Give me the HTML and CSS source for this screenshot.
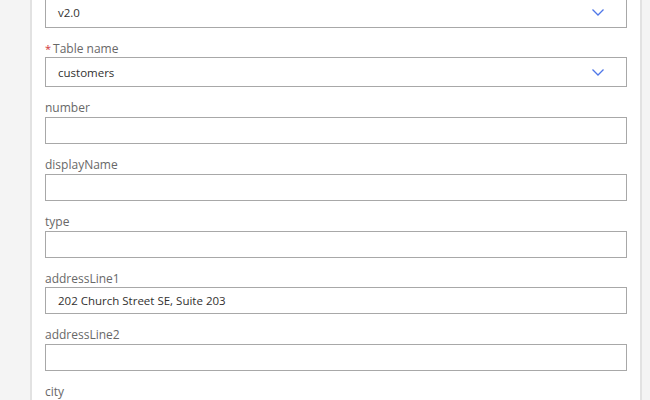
FILE: index.html
```html
<!DOCTYPE html>
<html lang="en">
  <head>
    <meta charset="utf-8">
    <title>Insert row</title>
    <link rel="stylesheet" href="styles.css">
  </head>
  <body>
    <div class="panel">
      <form class="form">
        <div class="field">
          <div class="dropdown">
            <span class="value">v2.0</span>
            <svg class="chevron" width="12" height="7" viewBox="0 0 12 7"><path d="M0.5 0.5 L6 6 L11.5 0.5" /></svg>
          </div>
        </div>
        <div class="field">
          <label><span class="req">*</span>Table name</label>
          <div class="dropdown">
            <span class="value">customers</span>
            <svg class="chevron" width="12" height="7" viewBox="0 0 12 7"><path d="M0.5 0.5 L6 6 L11.5 0.5" /></svg>
          </div>
        </div>
        <div class="field">
          <label>number</label>
          <input class="text" type="text">
        </div>
        <div class="field">
          <label>displayName</label>
          <input class="text" type="text">
        </div>
        <div class="field">
          <label>type</label>
          <input class="text" type="text">
        </div>
        <div class="field">
          <label>addressLine1</label>
          <input class="text" type="text" value="202 Church Street SE, Suite 203">
        </div>
        <div class="field">
          <label>addressLine2</label>
          <input class="text" type="text">
        </div>
        <div class="field">
          <label>city</label>
          <input class="text" type="text">
        </div>
      </form>
    </div>
  </body>
</html>
```

FILE: styles.css
```css
html { box-sizing : border-box }
*, *:before, *:after { box-sizing : inherit }

:root {
  --c-page : #f4f4f4;
  --c-panel : #ffffff;
  --c-edge : #e2e2e2;
  --c-border : #a8a8a8;
  --c-label : #686868;
  --c-text : #323130;
  --c-req : #d13438;
  --c-accent : #4f77e8;

  --f-prop : "Open Sans", "Noto Sans", sans-serif;
}

body {
  margin : 0;
  height : 400px;
  overflow : hidden;
  background-color : var(--c-page);
  font-family : var(--f-prop);
}

.panel {
  margin-left : 30px;
  width : 612px;
  min-height : 400px;
  padding : 0 13px;
  background-color : var(--c-panel);
  border-left : 2px solid var(--c-edge);
  border-right : 2px solid var(--c-edge);
}

.form {
  display : flex;
  flex-direction : column;
  gap : 13px;
  margin-top : -2.5px;
}

.field label {
  display : block;
  margin-bottom : 0.75px;
  line-height : 16px;
  font-size : 12px;
  color : var(--c-label);
}

.req {
  margin-right : 2px;
  color : var(--c-req);
  font-size : 11px;
}

.dropdown {
  display : flex;
  align-items : center;
  justify-content : space-between;
  height : 30px;
  padding : 0 22px 0 12px;
  border : 1px solid var(--c-border);
  font-size : 11.5px;
  color : var(--c-text);
}

.chevron path {
  fill : none;
  stroke : var(--c-accent);
  stroke-width : 1.3;
}

.text {
  display : block;
  width : 100%;
  height : 27px;
  margin : 0;
  padding : 0 12px;
  border : 1px solid var(--c-border);
  border-radius : 0;
  outline : none;
  font-family : var(--f-prop);
  font-size : 11.5px;
  color : var(--c-text);
  background : var(--c-panel);
}
```
